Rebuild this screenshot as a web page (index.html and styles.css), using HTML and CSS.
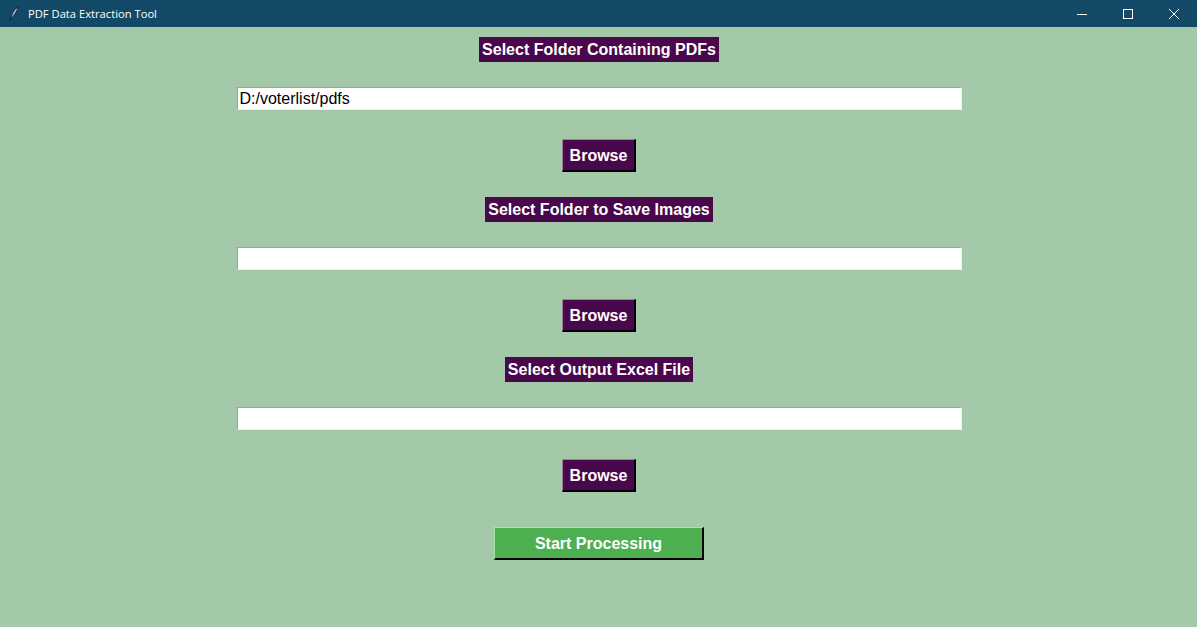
FILE: index.html
```html
<!DOCTYPE html>
<html>
<head>
<meta charset="utf-8">
<link rel="stylesheet" href="styles.css">
</head>
<body>
<div class="window">
  <div class="titlebar">
    <div class="title-left">
      <svg class="app-icon" width="12" height="16" viewBox="0 0 12 16">
        <path d="M10.5 1 C7 2.5 4.5 6 3.5 10 L3 12.5 C5.5 10.5 8.5 6.5 10.5 1 Z" fill="#8fb6e6" stroke="#1a1a1a" stroke-width="0.8"/>
        <path d="M3.2 12 L2 15" stroke="#1a1a1a" stroke-width="1"/>
      </svg>
      <span class="title-text">PDF Data Extraction Tool</span>
    </div>
    <div class="controls">
      <div class="ctl"><svg width="12" height="12" viewBox="0 0 12 12"><path d="M1 6.5 H11" stroke="#fff" stroke-width="1"/></svg></div>
      <div class="ctl"><svg width="12" height="12" viewBox="0 0 12 12"><rect x="1.5" y="1.5" width="9" height="9" fill="none" stroke="#fff" stroke-width="1"/></svg></div>
      <div class="ctl"><svg width="12" height="12" viewBox="0 0 12 12"><path d="M1 1 L11 11 M11 1 L1 11" stroke="#fff" stroke-width="1"/></svg></div>
    </div>
  </div>
  <div class="content">
    <div class="label">Select Folder Containing PDFs</div>
    <div class="entry">D:/voterlist/pdfs</div>
    <div class="btn">Browse</div>
    <div class="label">Select Folder to Save Images</div>
    <div class="entry"></div>
    <div class="btn">Browse</div>
    <div class="label">Select Output Excel File</div>
    <div class="entry"></div>
    <div class="btn">Browse</div>
    <div class="start">Start Processing</div>
  </div>
</div>
</body>
</html>
```
FILE: styles.css
```css
* { box-sizing: border-box; }
html, body { margin: 0; padding: 0; }
body { width: 1197px; height: 627px; overflow: hidden; background: #a3c9a8; }
.window { width: 1197px; height: 627px; display: flex; flex-direction: column; }
.titlebar {
  height: 27px;
  background: #114966;
  display: flex;
  align-items: center;
  justify-content: space-between;
  flex-shrink: 0;
}
.title-left { display: flex; align-items: center; padding-left: 8px; }
.app-icon { margin-right: 8px; }
.title-text {
  color: #ffffff;
  font-family: "Open Sans", "Noto Sans", sans-serif;
  font-size: 11.2px;
}
.controls { display: flex; height: 100%; }
.ctl {
  width: 46px;
  height: 100%;
  display: flex;
  align-items: center;
  justify-content: center;
}
.content {
  flex: 1;
  display: flex;
  flex-direction: column;
  align-items: center;
  padding-top: 10px;
  padding-left: 1px;
  background: #a3c9a8;
  font-family: "Liberation Sans", Arial, sans-serif;
}
.label {
  height: 25px;
  background: #48084b;
  color: #ffffff;
  font-weight: bold;
  font-size: 16px;
  line-height: 25px;
  padding: 0 3px;
  margin-bottom: 25px;
}
.entry {
  width: 725px;
  height: 23px;
  background: #ffffff;
  border-top: 1px solid #a0a0a0;
  border-left: 1px solid #a0a0a0;
  border-right: 1px solid #f0f0f0;
  border-bottom: 1px solid #f0f0f0;
  font-size: 16px;
  line-height: 21px;
  padding-left: 2px;
  color: #000;
  margin-bottom: 29px;
}
.btn {
  width: 74px;
  height: 33px;
  background: #48084b;
  color: #ffffff;
  font-weight: bold;
  font-size: 16px;
  line-height: 31px;
  text-align: center;
  border-top: 1px solid #9a7e9c;
  border-left: 1px solid #9a7e9c;
  border-right: 2px solid #000;
  border-bottom: 2px solid #000;
  margin-bottom: 25px;
}
.start {
  margin-top: 10px;
  width: 210px;
  height: 33px;
  background: #4caf50;
  color: #ffffff;
  font-weight: bold;
  font-size: 16px;
  line-height: 31px;
  text-align: center;
  border-top: 1px solid #a6e6a8;
  border-left: 1px solid #a6e6a8;
  border-right: 2px solid #000;
  border-bottom: 2px solid #000;
}
```
